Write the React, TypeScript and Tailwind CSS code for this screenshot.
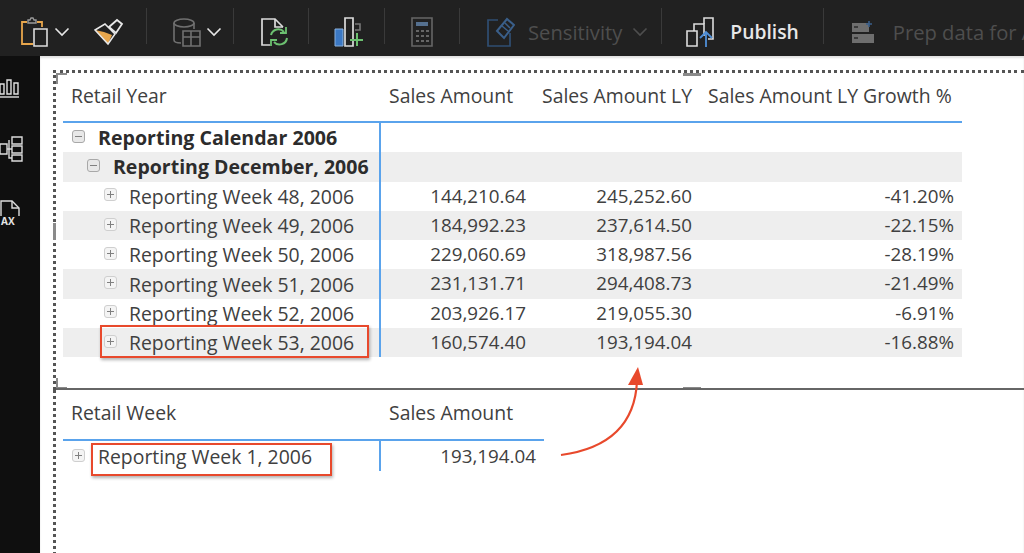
import type { ReactNode } from "react";

const weeks = [
  ["Reporting Week 48, 2006", "144,210.64", "245,252.60", "-41.20%"],
  ["Reporting Week 49, 2006", "184,992.23", "237,614.50", "-22.15%"],
  ["Reporting Week 50, 2006", "229,060.69", "318,987.56", "-28.19%"],
  ["Reporting Week 51, 2006", "231,131.71", "294,408.73", "-21.49%"],
  ["Reporting Week 52, 2006", "203,926.17", "219,055.30", "-6.91%"],
  ["Reporting Week 53, 2006", "160,574.40", "193,194.04", "-16.88%"],
];

function Sep({ ml }: { ml: string }) {
  return <div className={`mb-[12px] h-[36px] w-px shrink-0 bg-[#3a3a3a] ${ml}`} />;
}

function Chevron({ color = "#e6e6e6", className = "" }: { color?: string; className?: string }) {
  return (
    <svg width="16" height="10" viewBox="0 0 16 10" fill="none" className={`shrink-0 ${className}`}>
      <path d="M1.5 1.5 8 8l6.5-6.5" stroke={color} strokeWidth="1.6" />
    </svg>
  );
}

function Toolbar() {
  return (
    <div className="flex h-14 shrink-0 items-center overflow-hidden bg-[#212121] pt-[8px] font-['Open_Sans',sans-serif]">
      {/* clipboard */}
      <svg width="28" height="30" viewBox="0 0 28 30" fill="none" className="ml-[20px] shrink-0">
        <path d="M7 5H2v22h11" stroke="#e8a64c" strokeWidth="1.8" />
        <path d="M17 5h5v5" stroke="#e8a64c" strokeWidth="1.8" />
        <path d="M8 5V3h2l1-2h2l1 2h2v3H8z" stroke="#9a9a9a" strokeWidth="1.4" />
        <path d="M14 12h13v17H14z" stroke="#dcdcdc" strokeWidth="1.6" />
      </svg>
      <Chevron className="ml-[6px]" />
      {/* format painter */}
      <svg width="30" height="28" viewBox="0 0 30 28" fill="none" className="ml-[24px] shrink-0">
        <path d="M1 12 10 14l8 3-4 9z" fill="#e8a64c" />
        <path d="M1 12 11 6l10 10-7 10z" stroke="#e8e8e8" strokeWidth="1.5" />
        <path d="m15 9 8-7 5 4-6 9z" stroke="#e8e8e8" strokeWidth="1.8" />
      </svg>
      <Sep ml="ml-[22px]" />
      {/* table from database */}
      <svg width="28" height="30" viewBox="0 0 28 30" fill="none" className="ml-[26px] shrink-0">
        <ellipse cx="11" cy="6" rx="10" ry="4" stroke="#707070" strokeWidth="1.6" />
        <path d="M1 6v17c0 2 3 3 7 3M21 6v6" stroke="#707070" strokeWidth="1.6" />
        <path d="M10 14h17v15H10zM10 20h17M18 14v15" stroke="#707070" strokeWidth="1.6" />
      </svg>
      <Chevron className="ml-[5px]" />
      <Sep ml="ml-[11px]" />
      {/* refresh */}
      <svg width="30" height="30" viewBox="0 0 30 30" fill="none" className="ml-[26px] shrink-0">
        <path d="M10 28H2V2h13l8 8" stroke="#dcdcdc" strokeWidth="1.7" />
        <path d="M15 2v8h8" stroke="#dcdcdc" strokeWidth="1.7" />
        <path d="M11 18a7.5 7.5 0 0 1 13-3M27 21a7.5 7.5 0 0 1-13 4" stroke="#6cc070" strokeWidth="2" />
        <path d="M26 10v6h-6M11 29v-6h6" stroke="#6cc070" strokeWidth="1.8" />
      </svg>
      <Sep ml="ml-[18px]" />
      {/* new visual */}
      <svg width="30" height="30" viewBox="0 0 30 30" fill="none" className="ml-[25px] shrink-0">
        <path d="M1 12h8v17H1z" fill="#3b78c4" stroke="#8ab2e0" strokeWidth="1" />
        <path d="M11 1h8v28h-8z" stroke="#dcdcdc" strokeWidth="1.7" />
        <path d="M21 7h5v6h-5" stroke="#777" strokeWidth="1.6" />
        <path d="M23 16v13M16 23h13" stroke="#6cc070" strokeWidth="2" />
      </svg>
      <Sep ml="ml-[20px]" />
      {/* calculator */}
      <svg width="22" height="30" viewBox="0 0 22 30" fill="none" className="ml-[26px] shrink-0">
        <path d="M1 1h20v28H1z" stroke="#666" strokeWidth="1.6" />
        <path d="M5 5h12v4H5z" fill="#55708f" />
        <path d="M5 13h3v2H5zM10 13h3v2h-3zM15 13h3v2h-3zM5 18h3v2H5zM10 18h3v2h-3zM15 18h3v2h-3zM5 23h3v2H5zM10 23h3v2h-3zM15 23h3v2h-3z" fill="#666" />
      </svg>
      <Sep ml="ml-[26px]" />
      {/* sensitivity */}
      <svg width="28" height="30" viewBox="0 0 28 30" fill="none" className="ml-[27px] shrink-0">
        <path d="M11 3H1v26h22V16" stroke="#2f4e72" strokeWidth="1.7" />
        <path d="m10 14 10-12 7 6-10 13z" stroke="#3a5f8a" strokeWidth="2" />
        <path d="m15 9 6 5M18 6l5 5" stroke="#3a5f8a" strokeWidth="1.5" />
      </svg>
      <span className="ml-[13px] text-[20.2px] leading-none text-[#4e4e4e]">Sensitivity</span>
      <Chevron color="#4e4e4e" className="ml-[10px]" />
      <Sep ml="ml-[13px]" />
      {/* publish */}
      <svg width="30" height="30" viewBox="0 0 30 30" fill="none" className="ml-[24px] shrink-0">
        <path d="M1 14h10v15H1z" stroke="#dcdcdc" strokeWidth="1.6" />
        <path d="M8 14V7h10v12" stroke="#dcdcdc" strokeWidth="1.6" />
        <path d="M18 7V1h9v21h-5" stroke="#dcdcdc" strokeWidth="1.6" />
        <path d="M20 30V15m-6 6 6-6 6 6" stroke="#4f8ed6" strokeWidth="1.8" />
      </svg>
      <span className="ml-[14px] text-[19.3px] font-semibold leading-none text-[#e8e8e8]">Publish</span>
      <Sep ml="ml-[24px]" />
      {/* prep data */}
      <svg width="24" height="24" viewBox="0 0 24 24" fill="none" className="ml-[27px] shrink-0">
        <path d="M1 3h17v9H1zM1 14h22v9H1z" fill="#6e6e6e" />
        <path d="M3 7h4M3 18h4" stroke="#2b2b2b" strokeWidth="1.6" />
        <path d="M18 1v6M15 4h6" stroke="#3a5f8a" strokeWidth="1.6" />
      </svg>
      <span className="ml-[18px] whitespace-nowrap text-[20.2px] leading-none text-[#4e4e4e]">Prep data for AI</span>
    </div>
  );
}

function Rail() {
  return (
    <div className="flex w-10 shrink-0 flex-col gap-[38px] overflow-hidden bg-[#0f0f0f] pt-[20px]">
      <svg width="20" height="22" viewBox="0 0 20 22" fill="none">
        <path d="M0 8h4v10H0zM7 4h4v14H7zM14 7h4v11h-4z" stroke="#e0e0e0" strokeWidth="1.4" />
        <path d="M0 21h19" stroke="#e0e0e0" strokeWidth="1.4" />
      </svg>
      <svg width="24" height="26" viewBox="0 0 24 26" fill="none">
        <path d="M0 8h7v10H0zM12 1h10v7H12zM12 10h10v7H12zM12 19h10v6H12zM7 13h5M9 4v18h3" stroke="#dcdcdc" strokeWidth="1.4" />
      </svg>
      <div className="relative h-[26px] w-[22px]">
        <svg width="22" height="26" viewBox="0 0 22 26" fill="none">
          <path d="M1 16V1h11l7 7v8" stroke="#dcdcdc" strokeWidth="1.4" />
          <path d="M12 1v7h7" stroke="#dcdcdc" strokeWidth="1.4" />
        </svg>
        <span className="absolute left-[1px] top-[16px] font-['Open_Sans',sans-serif] text-[10px] font-bold leading-none text-[#e4e4e4]">AX</span>
      </div>
    </div>
  );
}

function Toggle({ open, dark }: { open?: boolean; dark?: boolean }) {
  return (
    <span className={`mb-[3px] flex h-[13px] w-[13px] shrink-0 items-center justify-center rounded-[3px] border ${open ? "border-[#a8a8a8] bg-[#e8e8e8]" : "border-[#cfcfcf] bg-[#f4f4f4]"} ${dark ? "bg-[#dedede]" : ""}`}>
      <svg width="9" height="9" viewBox="0 0 9 9" fill="none">
        <path d="M1 4.5h7" stroke="#808080" strokeWidth="1" />
        {!open && <path d="M4.5 1v7" stroke="#808080" strokeWidth="1" />}
      </svg>
    </span>
  );
}

function Row({ children, shaded }: { children: ReactNode; shaded?: boolean }) {
  return (
    <div className={`grid h-[29.3px] grid-cols-[317px_154px_166px_262px] items-center ${shaded ? "bg-[#eeeeee]" : ""}`}>{children}</div>
  );
}

function Cell({ children }: { children?: ReactNode }) {
  return <div className="h-full pr-[8px] text-right text-[18.8px] leading-[29px]">{children}</div>;
}

function Handle({ className }: { className: string }) {
  return <div className={`absolute bg-[#8a8a8a] ${className}`} />;
}

function MainTable() {
  return (
    <div className="relative h-[320px] w-full border-l-[3px] border-t-[3px] border-dotted border-b-0 border-l-[#555555] border-t-[#555555]">
      <Handle className="left-0 top-0 h-[11px] w-[2px]" />
      <Handle className="left-0 top-0 h-[2px] w-[11px]" />
      <Handle className="left-[-3px] top-[150px] h-[17px] w-[3px]" />
      <Handle className="left-[627px] top-0 h-[3px] w-[18px]" />
      <Handle className="bottom-[1px] left-0 h-[11px] w-[2px]" />
      <Handle className="bottom-[1px] left-0 h-[2px] w-[11px]" />
      <Handle className="bottom-0 left-[627px] h-[3px] w-[18px]" />
      <div className="absolute inset-x-0 bottom-0 h-[2px] bg-[#666666]" />

      <div className="pl-[7px]">
        <div className="w-[899px]">
          <div className="grid h-[50px] grid-cols-[317px_154px_166px_262px] items-center border-b-2 border-[#5aa3ec] pb-[3px]">
            <span className="pl-[8px]">Retail Year</span>
            <span className="pl-[9px]">Sales Amount</span>
            <span className="pl-[8px]">Sales Amount LY</span>
            <span className="whitespace-nowrap pl-[8px]">Sales Amount LY Growth %</span>
          </div>
          <div className="relative">
            <div className="absolute bottom-0 left-[316px] top-0 w-[2px] bg-[#5aa3ec]" />
            <Row>
              <div className="flex items-center pl-[9px] text-[19.6px] font-bold text-[#2c2c2c]">
                <Toggle open />
                <span className="ml-[13px] whitespace-nowrap">Reporting Calendar 2006</span>
              </div>
            </Row>
            <Row shaded>
              <div className="flex items-center pl-[24px] text-[19.5px] font-bold text-[#2c2c2c]">
                <Toggle open dark />
                <span className="ml-[13px] whitespace-nowrap">Reporting December, 2006</span>
              </div>
            </Row>
            {weeks.map((w, i) => (
              <Row key={w[0]} shaded={i % 2 === 1}>
                <div className="flex items-center pl-[41px]">
                  <Toggle dark={i % 2 === 1} />
                  <span className="ml-[12px] whitespace-nowrap">{w[0]}</span>
                </div>
                <Cell>{w[1]}</Cell>
                <Cell>{w[2]}</Cell>
                <Cell>{w[3]}</Cell>
              </Row>
            ))}
          </div>
        </div>
      </div>
    </div>
  );
}

function WeekTable() {
  return (
    <div className="h-full border-l-[3px] border-dotted border-l-[#555555] pl-[7px]">
      <div className="w-[481px]">
        <div className="grid h-[51px] grid-cols-[317px_164px] items-center border-b-2 border-[#5aa3ec] pb-[3px]">
          <span className="pl-[8px]">Retail Week</span>
          <span className="pl-[9px]">Sales Amount</span>
        </div>
        <div className="relative grid h-[30px] grid-cols-[317px_164px] items-center pt-[1px]">
          <div className="absolute bottom-0 left-[316px] top-0 w-[2px] bg-[#5aa3ec]" />
          <div className="flex items-center pl-[9px]">
            <Toggle />
            <span className="ml-[13px] whitespace-nowrap">Reporting Week 1, 2006</span>
          </div>
          <div className="pr-[8px] text-right text-[18.8px]">193,194.04</div>
        </div>
      </div>
    </div>
  );
}

export default function App() {
  return (
    <div className="relative flex h-[553px] w-[1024px] flex-col overflow-hidden bg-white">
      <Toolbar />
      <div className="flex min-h-0 flex-1">
        <Rail />
        <div className="min-w-0 flex-1 pl-[13px] pt-[14px] font-['Open_Sans',sans-serif] text-[19.4px] leading-normal text-[#404040] shadow-[inset_0_2px_2px_rgba(0,0,0,0.12)]">
          <MainTable />
          <WeekTable />
        </div>
      </div>

      {/* annotation boxes and arrow */}
      <div className="absolute left-[100px] top-[325px] h-[33px] w-[269px] border-2 border-[#e8492c] shadow-[1px_2px_3px_rgba(0,0,0,0.3)]" />
      <div className="absolute left-[91px] top-[443px] h-[33px] w-[241px] border-2 border-[#e8492c] shadow-[1px_2px_3px_rgba(0,0,0,0.3)]" />
      <svg width="100" height="100" viewBox="0 0 100 100" fill="none" className="absolute left-[555px] top-[365px]">
        <path d="M6 90C50 84 80 62 82 16" stroke="#e8492c" strokeWidth="2.2" />
        <path d="M83 2 73 20l15 0z" fill="#e8492c" />
      </svg>
    </div>
  );
}
